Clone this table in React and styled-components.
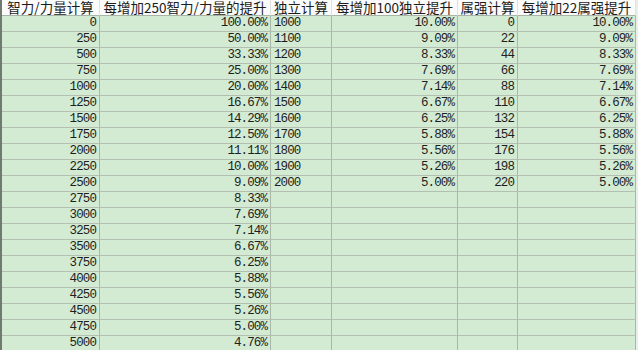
import React from "react";
import styled, { createGlobalStyle } from "styled-components";

const Global = createGlobalStyle`
  html, body {
    margin: 0;
    padding: 0;
    background: #f4f6f4;
    overflow: hidden;
  }
`;

const Sheet = styled.div`
  display: grid;
  grid-template-columns: 98px 171px 61px 126px 60px 118px 2px;
  grid-auto-rows: 16px;
  width: 638px;
  height: 350px;
  border-left: 2px solid #6f7b6e;
  box-sizing: border-box;
  overflow: hidden;
  background: #d3ebd2;
`;

const Head = styled.div`
  box-sizing: border-box;
  background: #fafbfa;
  border-right: 1px solid #dfe3df;
  border-bottom: 1px solid #a8b4a6;
  font-family: "Noto Sans CJK SC", "Noto Sans", sans-serif;
  font-size: 13.5px;
  line-height: 15px;
  color: #1c1c1c;
  text-align: center;
  white-space: nowrap;
`;

const Cell = styled.div`
  box-sizing: border-box;
  background: #d3ebd2;
  border-right: 1px solid #a9b7a7;
  border-bottom: 1px solid #b3c0b1;
  font-family: "Liberation Mono", "DejaVu Sans Mono", monospace;
  font-size: 12.5px;
  letter-spacing: -0.9px;
  line-height: 15px;
  color: #1e1e1e;
  text-align: ${(p) => (p.$left ? "left" : "right")};
  padding: ${(p) => (p.$left ? "0 0 0 3px" : "0 3px 0 0")};
  white-space: nowrap;
`;

const Edge = styled.div`
  background: #e8efe8;
`;

const heads = [
  "智力/力量计算",
  "每增加250智力/力量的提升",
  "独立计算",
  "每增加100独立提升",
  "属强计算",
  "每增加22属强提升",
];

const pct = (n) => (100 / n).toFixed(2) + "%";

const rows = Array.from({ length: 21 }, (_, i) => {
  const small = i < 11;
  return [
    String(i * 250),
    pct(i + 1),
    small ? String(1000 + i * 100) : "",
    small ? pct(10 + i) : "",
    small ? String(i * 22) : "",
    small ? pct(10 + i) : "",
  ];
});

export default function App() {
  return (
    <>
      <Global />
      <Sheet>
        {heads.map((h) => (
          <Head key={h}>{h}</Head>
        ))}
        <Edge />
        {rows.map((r, i) => (
          <React.Fragment key={i}>
            {r.map((v, j) => (
              <Cell key={j} $left={j === 2}>
                {v}
              </Cell>
            ))}
            <Edge />
          </React.Fragment>
        ))}
      </Sheet>
    </>
  );
}
